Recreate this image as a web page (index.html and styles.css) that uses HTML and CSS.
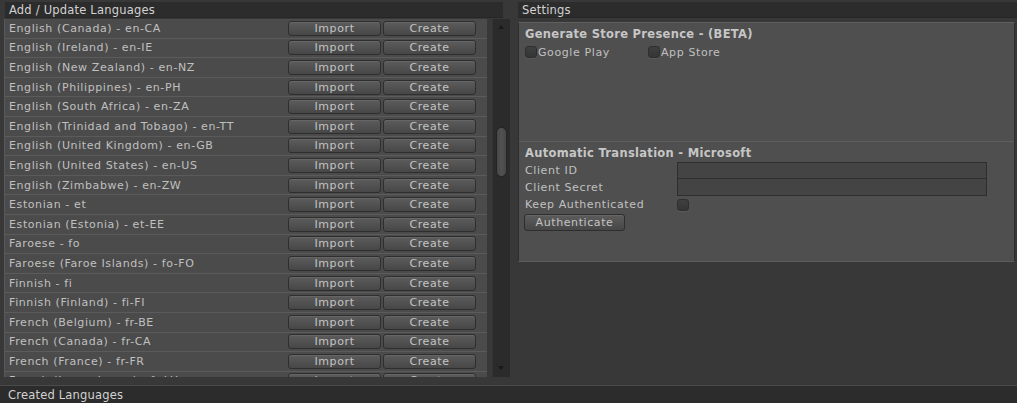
FILE: index.html
```html
<!DOCTYPE html>
<html lang="en">
<head>
  <meta charset="UTF-8">
  <title>Languages</title>
  <link rel="stylesheet" href="styles.css">
</head>
<body>
  <div class="main">
    <div class="left">
      <div class="panel-title left-title">Add / Update Languages</div>
      <div class="list-wrap">
        <div class="list" id="langList"></div>
        <div class="scrollbar">
          <div class="arrow up"></div>
          <div class="thumb"></div>
          <div class="arrow down"></div>
        </div>
      </div>
    </div>
    <div class="right">
      <div class="panel-title">Settings</div>
      <div class="settings">
        <div class="group store">
          <div class="group-title">Generate Store Presence - (BETA)</div>
          <div class="check-row">
            <label class="check wide"><span class="box"></span>Google Play</label>
            <label class="check"><span class="box"></span>App Store</label>
          </div>
        </div>
        <div class="group">
          <div class="group-title">Automatic Translation - Microsoft</div>
          <div class="field"><span class="field-label">Client ID</span><span class="input"></span></div>
          <div class="field"><span class="field-label">Client Secret</span><span class="input"></span></div>
          <div class="field"><span class="field-label">Keep Authenticated</span><span class="box"></span></div>
          <button class="btn auth">Authenticate</button>
        </div>
      </div>
    </div>
  </div>
  <div class="bottom">Created Languages</div>
  <script>
    const langs = [
      'English (Canada) - en-CA',
      'English (Ireland) - en-IE',
      'English (New Zealand) - en-NZ',
      'English (Philippines) - en-PH',
      'English (South Africa) - en-ZA',
      'English (Trinidad and Tobago) - en-TT',
      'English (United Kingdom) - en-GB',
      'English (United States) - en-US',
      'English (Zimbabwe) - en-ZW',
      'Estonian - et',
      'Estonian (Estonia) - et-EE',
      'Faroese - fo',
      'Faroese (Faroe Islands) - fo-FO',
      'Finnish - fi',
      'Finnish (Finland) - fi-FI',
      'French (Belgium) - fr-BE',
      'French (Canada) - fr-CA',
      'French (France) - fr-FR',
      'French (Luxembourg) - fr-LU'
    ];
    document.getElementById('langList').innerHTML = langs.map(l =>
      `<div class="row"><span class="lang">${l}</span><button class="btn">Import</button><button class="btn">Create</button></div>`
    ).join('');
  </script>
</body>
</html>
```
FILE: styles.css
```css
body {
  margin: 0;
  width: 1017px;
  height: 403px;
  overflow: hidden;
  background-color: #383838;
  font-family: "DejaVu Sans", Verdana, sans-serif;
  font-size: 11px;
  letter-spacing: 0.6px;
  color: #c0c0c0;
}
.main {
  display: flex;
  height: 383px;
}
.left {
  width: 510px;
  padding-left: 4px;
}
.right {
  width: 499px;
  margin-left: 4px;
}
.panel-title {
  height: 16px;
  margin-top: 2px;
  line-height: 16px;
  padding-left: 4px;
  background-color: #2c2c2c;
  border-bottom: 1px solid #262626;
  box-sizing: border-box;
  color: #d2d2d2;
  font-size: 11.5px;
  letter-spacing: 0.2px;
}
.left-title {
  margin-left: 1px;
  width: 498px;
}
.list-wrap {
  display: flex;
  height: 358px;
  margin-top: 1px;
}
.list {
  width: 483px;
  overflow: hidden;
  border-left: 1px solid #5a5a5a;
  box-sizing: border-box;
}
.row {
  height: 19.6px;
  box-sizing: border-box;
  display: flex;
  align-items: center;
  padding: 0 11px 0 4px;
  background-color: #4b4b4b;
  border-bottom: 1px solid #5b5b5b;
}
.lang {
  flex: 1;
  white-space: nowrap;
}
.btn {
  height: 15px;
  padding: 0;
  margin-left: 2px;
  width: 93px;
  border: 1px solid #2e2e2e;
  border-radius: 3px;
  background: linear-gradient(#5c5c5c, #474747);
  color: #c4c4c4;
  font-family: "DejaVu Sans", Verdana, sans-serif;
  font-size: 11px;
  letter-spacing: 0.6px;
  line-height: 13px;
  box-shadow: inset 0 1px 0 #666;
}
.scrollbar {
  width: 17px;
  margin-left: 5px;
  background-color: #2b2b2b;
  border-left: 1px solid #333;
  position: relative;
}
.arrow {
  position: absolute;
  left: 5px;
  width: 0;
  height: 0;
  border-left: 3.5px solid transparent;
  border-right: 3.5px solid transparent;
}
.arrow.up {
  top: 6px;
  border-bottom: 4px solid #1a1a1a;
}
.arrow.down {
  bottom: 7px;
  border-top: 4px solid #1a1a1a;
}
.thumb {
  margin: 108px auto 0;
  width: 11px;
  height: 50px;
  border-radius: 6px;
  background: linear-gradient(90deg, #474747, #525252, #474747);
  border: 1px solid #252525;
  box-sizing: border-box;
}
.settings {
  margin-top: 4px;
  width: 497px;
  height: 240px;
  background-color: #4f4f4f;
  border-top: 1px solid #606060;
  border-left: 1px solid #2e2e2e;
  border-right: 1px solid #2e2e2e;
  border-bottom: 1px solid #5c5c5c;
  box-sizing: border-box;
}
.group {
  padding: 3px 6px;
}
.store {
  height: 119px;
  box-sizing: border-box;
  border-bottom: 1px solid #5e5e5e;
}
.group-title {
  font-weight: bold;
  color: #c6c6c6;
  height: 17px;
  line-height: 17px;
  font-size: 11.5px;
  letter-spacing: 0.3px;
}
.check-row {
  display: flex;
  margin-top: 1px;
}
.check {
  display: flex;
  align-items: center;
  height: 16px;
}
.check.wide {
  width: 123px;
}
.box {
  display: inline-block;
  width: 12px;
  height: 12px;
  margin-right: 1px;
  border-radius: 3px;
  background: linear-gradient(#3f3f3f, #353535);
  border: 1px solid #2f2f2f;
  box-sizing: border-box;
  box-shadow: 0 1px 0 #5a5a5a;
}
.field {
  display: flex;
  align-items: center;
  height: 17px;
}
.field-label {
  width: 152px;
  flex-shrink: 0;
}
.input {
  width: 310px;
  height: 18px;
  background-color: #444;
  border: 1px solid #2e2e2e;
  box-sizing: border-box;
}
.field + .field .input {
  margin-top: -1px;
}
.auth {
  display: block;
  margin: 1px 0 0 -1px;
  width: 101px;
  height: 17px;
}
.bottom {
  height: 18px;
  margin-top: 2px;
  line-height: 18px;
  padding-left: 8px;
  background-color: #2c2c2c;
  border-top: 1px solid #4a4a4a;
  box-sizing: border-box;
  color: #d2d2d2;
  font-size: 11.5px;
  letter-spacing: 0.2px;
}
```
